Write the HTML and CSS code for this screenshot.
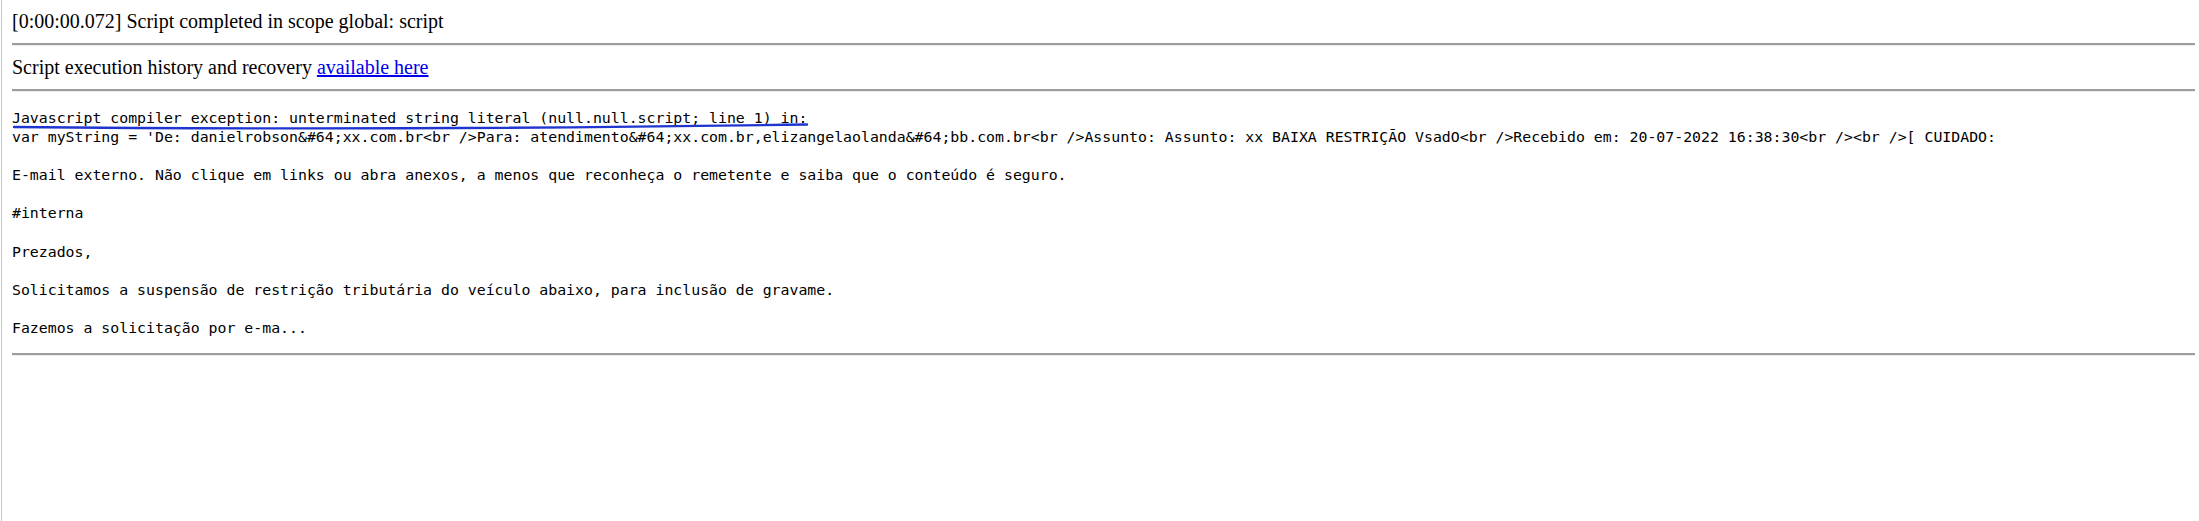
FILE: index.html
```html
<!DOCTYPE html>
<html lang="pt">
<head>
  <meta charset="UTF-8">
  <title>Script log</title>

  <link rel="stylesheet" href="styles.css">
</head>
<body>
  <div class="log">
    <p class="status">[0:00:00.072] Script completed in scope global: script</p>
    <hr>
    <p class="status">Script execution history and recovery <a href="#">available here</a></p>
    <hr>
    <div class="error">
<pre>Javascript compiler exception: unterminated string literal (null.null.script; line 1) in:
var myString = 'De: danielrobson&amp;#64;xx.com.br&lt;br /&gt;Para: atendimento&amp;#64;xx.com.br,elizangelaolanda&amp;#64;bb.com.br&lt;br /&gt;Assunto: Assunto: xx BAIXA RESTRIÇÃO VsadO&lt;br /&gt;Recebido em: 20-07-2022 16:38:30&lt;br /&gt;&lt;br /&gt;[ CUIDADO:

E-mail externo. Não clique em links ou abra anexos, a menos que reconheça o remetente e saiba que o conteúdo é seguro.

#interna

Prezados,

Solicitamos a suspensão de restrição tributária do veículo abaixo, para inclusão de gravame.

Fazemos a solicitação por e-ma...</pre>
      <svg class="mark" width="820" height="14" viewBox="0 0 820 14">
        <path d="M2 7 C 250 9.5, 560 8, 795 4.5" fill="none" stroke="#1f35d0" stroke-width="2.4" stroke-linecap="round"/>
      </svg>
    </div>
    <hr class="last">
  </div>
</body>
</html>
```

FILE: styles.css
```css
html, body {
  margin: 0;
  height: 100%;
  background: #fff;
}

body {
  font-family: "Liberation Serif", "Times New Roman", serif;
  color: #000;
}

.log {
  margin-left: 1px;
  min-height: 100%;
  border-left: 1px solid #c9c9c9;
  padding: 10px 4px 0 10px;
  box-sizing: border-box;
}

.status {
  margin: 0;
  font-size: 20px;
  line-height: 23px;
}

.status a {
  color: #0000ee;
}

hr {
  height: 0;
  margin: 10px 0;
  border: 0;
  border-top: 2px solid #9d9d9d;
  border-bottom: 1px solid #ececec;
}

.error {
  position: relative;
  margin-top: 17px;
}

.error pre {
  margin: 0;
  font-family: "DejaVu Sans Mono", "Liberation Mono", monospace;
  font-size: 14.85px;
  line-height: 19.1px;
}

.mark {
  position: absolute;
  left: 0;
  top: 11px;
}

.last {
  margin-top: 15px;
}
```
